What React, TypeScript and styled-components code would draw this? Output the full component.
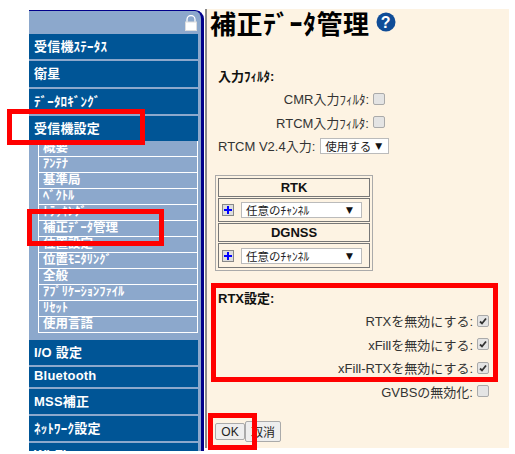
import React from "react";
import styled, { createGlobalStyle } from "styled-components";

const Global = createGlobalStyle`
  html, body { margin: 0; padding: 0; background: #fff; }
  body { font-family: "Liberation Sans", "Noto Sans CJK JP", sans-serif; }
`;
const Page = styled.div`
  position: relative; width: 515px; height: 454px; overflow: hidden; background: #fff;
  display: flex; align-items: flex-start; padding: 9px 6px 0 29px; box-sizing: border-box;
`;
const Sidebar = styled.nav`
  width: 175px; height: 441px; flex: none; box-sizing: border-box; background: #8ca8cc;
  margin-top: 1px; border-top: 1px solid #00008b; border-right: 3px solid #00008b;
  border-top-right-radius: 9px; padding-right: 3px; overflow: hidden; display: flex; flex-direction: column;
`;
const LockBar = styled.div`
  height: 23px; flex: none; display: flex; justify-content: flex-end; align-items: flex-start; padding: 4px 1px 0 0; box-sizing: border-box;
`;
const Main = styled.a<{ $h: number }>`
  display: flex; align-items: center; height: ${p => p.$h}px; flex: none; margin-bottom: 2px; padding: 0 0 3px 5px; box-sizing: border-box;
  background: #005596; color: #fff; font-weight: 700; font-size: 13px; letter-spacing: .2px; white-space: nowrap;
`;
const SubList = styled.ul`
  list-style: none; margin: -2px 0 7px 9px; padding: 0; border: 1px solid #fff; border-top: 0; display: flex; flex-direction: column;
`;
const SubItem = styled.li`
  height: 15px; line-height: 15px; border-bottom: 1px solid #fff; padding-left: 4px; color: #fff; font-weight: 700; font-size: 12.5px;
  white-space: nowrap; overflow: hidden; &:last-child { border-bottom: 0; }
`;
const Content = styled.main`
  width: 304px; height: 439px; flex: none; margin-left: 1px; background: #fdf3e3; box-sizing: border-box;
  border-left: 2px solid #8a8a8a; padding: 0 0 0 3px; color: #333; font-size: 13px; display: flex; flex-direction: column;
`;
const Title = styled.h1`
  margin: 0; height: 26px; flex: none; display: flex; align-items: center; gap: 6px; font-size: 26px; letter-spacing: .5px; font-weight: 700; color: #000; white-space: nowrap;
`;
const Section = styled.div<{ $top: number }>`
  margin: ${p => p.$top}px 0 2px 8px; font-weight: 700; font-size: 13px; height: 17px; line-height: 17px; color: #111;
`;
const Row = styled.div<{ $w: number }>`
  width: ${p => p.$w}px; height: 23.5px; flex: none; display: flex; align-items: center; justify-content: flex-end; gap: 4px; white-space: nowrap;
`;
const SelectRow = styled.div`
  margin-left: 8px; height: 23.5px; flex: none; display: flex; align-items: center; gap: 5px; white-space: nowrap;
`;
const Box = styled.span`
  width: 10px; height: 10px; flex: none; border: 1px solid #aaa; border-radius: 2px; background: #e4e4e4; display: inline-flex; align-items: center; justify-content: center;
`;
const Select = styled.div<{ $w: number; $pad: number }>`
  width: ${p => p.$w}px; height: 16px; box-sizing: border-box; border: 1px solid #bbb; background: #fff; display: flex; align-items: center; justify-content: space-between;
  padding: 0 ${p => p.$pad}px 0 4px; font-size: 11.5px; color: #222; overflow: hidden; white-space: nowrap; flex: none;
`;
const Arrow = styled.span`
  font-size: 9px; color: #111; font-family: "DejaVu Sans", sans-serif;
`;
const Table = styled.div`
  width: 158px; margin: 17.5px 0 0 5px; box-sizing: border-box; border: 1px solid #aaa; padding: 2px; display: flex; flex-direction: column; gap: 1px; flex: none;
`;
const HeadCell = styled.div`
  height: 19px; box-sizing: border-box; border: 1px solid #777; font-weight: 700; font-size: 13px; color: #111; display: flex; align-items: center; justify-content: center;
`;
const BodyCell = styled.div<{ $h: number }>`
  height: ${p => p.$h}px; box-sizing: border-box; border: 1px solid #777; display: flex; align-items: center; gap: 7px; padding-left: 3px;
`;
const Plus = styled.span`
  width: 12px; height: 12px; box-sizing: border-box; border: 1px solid #888; background: #ddd; display: inline-flex; align-items: center; justify-content: center; flex: none;
`;
const Buttons = styled.div`
  margin: 18px 0 0 5px; display: flex; align-items: center;
`;
const Btn = styled.button<{ $w: number; $h: number }>`
  width: ${p => p.$w}px; height: ${p => p.$h}px; padding: 0; background: #eee; border: 1px solid #aaa; border-radius: 2px; color: #222; font-size: 12px;
  font-family: "Liberation Sans", "Noto Sans CJK JP", sans-serif;
`;
const Mark = styled.div<{ $x: number; $y: number; $w: number; $h: number }>`
  position: absolute; left: ${p => p.$x}px; top: ${p => p.$y}px; width: ${p => p.$w}px; height: ${p => p.$h}px; box-sizing: border-box; border: 5px solid #f00; pointer-events: none;
`;

const Check = () => (
  <svg width="8" height="8" viewBox="0 0 8 8"><path d="M1 4.5 3 6.5 7 1.5" fill="none" stroke="#333" strokeWidth="1.8" /></svg>
);
const Lock = () => (
  <svg width="12" height="16" viewBox="0 0 12 16">
    <path d="M2 7V4.5a4 4 0 0 1 8 0V7" fill="none" stroke="#fff" strokeWidth="1.3" />
    <rect x="0.5" y="7" width="11" height="8.5" fill="#fff" stroke="#ddd" />
  </svg>
);
const Help = () => (
  <svg width="20" height="20" viewBox="0 0 20 20">
    <circle cx="10" cy="10" r="9.5" fill="#0f4c97" />
    <text x="10" y="15.5" textAnchor="middle" fontSize="16" fontWeight="700" fill="#fff" fontFamily="Liberation Sans">?</text>
  </svg>
);
const PlusIcon = () => (
  <svg width="10" height="10" viewBox="0 0 10 10"><path d="M5 1v8M1 5h8" stroke="#0000ff" strokeWidth="2" /></svg>
);
const Chooser = ({ h }: { h: number }) => (
  <BodyCell $h={h}>
    <Plus><PlusIcon /></Plus>
    <Select $w={121} $pad={8}>任意のﾁｬﾝﾈﾙ<Arrow>▼</Arrow></Select>
  </BodyCell>
);

const subs = ["概要", "ｱﾝﾃﾅ", "基準局", "ﾍﾞｸﾄﾙ", "ﾄﾗｯｷﾝｸﾞ", "補正ﾃﾞｰﾀ管理", "位置設定", "位置ﾓﾆﾀﾘﾝｸﾞ", "全般", "ｱﾌﾟﾘｹｰｼｮﾝﾌｧｲﾙ", "ﾘｾｯﾄ", "使用言語"];

export default function App() {
  return (
    <Page>
      <Global />
      <Sidebar>
        <LockBar><Lock /></LockBar>
        <Main $h={25}>受信機ｽﾃｰﾀｽ</Main>
        <Main $h={26}>衛星</Main>
        <Main $h={25}>ﾃﾞｰﾀﾛｷﾞﾝｸﾞ</Main>
        <Main $h={25}>受信機設定</Main>
        <SubList>{subs.map(s => <SubItem key={s}>{s}</SubItem>)}</SubList>
        <Main $h={25}>I/O 設定</Main>
        <Main $h={20}>Bluetooth</Main>
        <Main $h={25}>MSS補正</Main>
        <Main $h={25}>ﾈｯﾄﾜｰｸ設定</Main>
        <Main $h={25}>Wi-Fi</Main>
      </Sidebar>
      <Content>
        <Title>補正ﾃﾞｰﾀ管理<Help /></Title>
        <Section $top={33}>入力ﾌｨﾙﾀ:</Section>
        <Row $w={175}>CMR入力ﾌｨﾙﾀ: <Box /></Row>
        <Row $w={175}>RTCM入力ﾌｨﾙﾀ: <Box /></Row>
        <SelectRow>RTCM V2.4入力:<Select $w={69} $pad={6}>使用する<Arrow>▼</Arrow></Select></SelectRow>
        <Table>
          <HeadCell>RTK</HeadCell>
          <Chooser h={24} />
          <HeadCell>DGNSS</HeadCell>
          <Chooser h={25} />
        </Table>
        <Section $top={19}>RTX設定:</Section>
        <Row $w={279}>RTXを無効にする: <Box><Check /></Box></Row>
        <Row $w={279}>xFillを無効にする: <Box><Check /></Box></Row>
        <Row $w={279}>xFill-RTXを無効にする: <Box><Check /></Box></Row>
        <Row $w={279}>GVBSの無効化: <Box /></Row>
        <Buttons>
          <Btn $w={30} $h={17}>OK</Btn>
          <Btn $w={36} $h={21}>取消</Btn>
        </Buttons>
      </Content>
      <Mark $x={7} $y={109} $w={138} $h={36} />
      <Mark $x={27} $y={209} $w={137} $h={37} />
      <Mark $x={211} $y={283} $w={287} $h={99} />
      <Mark $x={208} $y={413} $w={49} $h={37} />
    </Page>
  );
}
